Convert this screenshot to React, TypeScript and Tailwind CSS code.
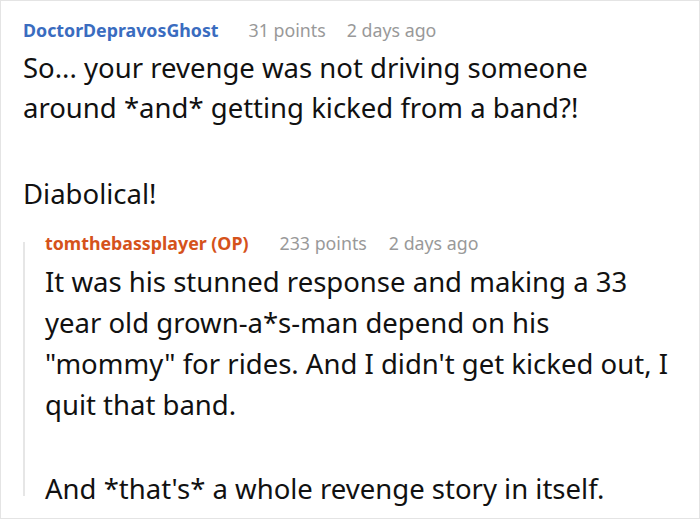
export default function App() {
  return (
    <div className="w-[700px] h-[520px] overflow-hidden bg-white">
      <div
        className="h-[519px] border border-[#e4e4e4] pt-[17px] pl-[22px] pr-1 text-[#111]"
        style={{ fontFamily: '"Noto Sans", "Open Sans", sans-serif' }}
      >
        {/* Parent comment */}
        <div className="flex items-center text-[17.8px] leading-6 whitespace-nowrap">
          <span className="font-bold text-[#3a6cbf] mr-[30px]">DoctorDepravosGhost</span>
          <span className="text-[#999] mr-[21px]">31 points</span>
          <span className="text-[#999]">2 days ago</span>
        </div>
        <div className="mt-[6px] text-[27.5px] leading-[40px] whitespace-nowrap">
          <p>
            So... your revenge was not driving someone
            <br />
            around *and* getting kicked from a band?!
          </p>
          <p className="mt-[46px]">Diabolical!</p>
        </div>

        {/* Reply */}
        <div className="flex mt-[17px]">
          <div className="w-[2px] bg-[#e6e6e6] mt-[11px] mb-[13px] shrink-0" />
          <div className="pl-[20px]">
            <div className="flex items-center text-[17.8px] leading-6 whitespace-nowrap">
              <span className="font-bold text-[#d5521b] mr-[31px]">tomthebassplayer (OP)</span>
              <span className="text-[#999] mr-[22px]">233 points</span>
              <span className="text-[#999]">2 days ago</span>
            </div>
            <div className="mt-[6px] text-[27.5px] leading-[41px] whitespace-nowrap">
              <p>
                It was his stunned response and making a 33
                <br />
                year old grown-a*s-man depend on his
                <br />
                "mommy" for rides. And I didn't get kicked out, I
                <br />
                quit that band.
              </p>
              <p className="mt-[43px]">And *that's* a whole revenge story in itself.</p>
            </div>
          </div>
        </div>
      </div>
    </div>
  );
}
